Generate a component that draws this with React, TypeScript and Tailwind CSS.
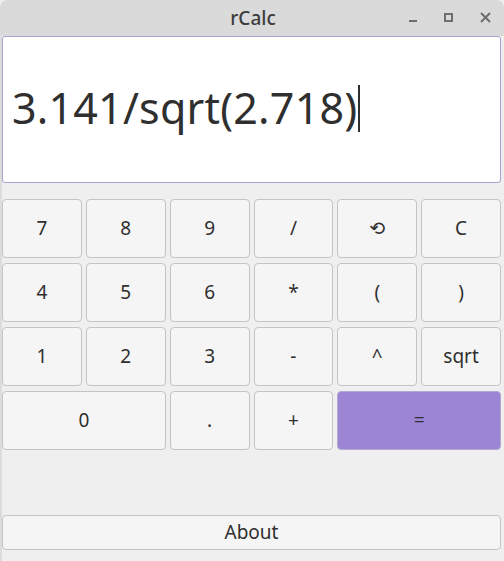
import React from "react";

const font = { fontFamily: '"Noto Sans", "Open Sans", "DejaVu Sans", sans-serif' };

type Key = { label: string; span?: boolean; accent?: boolean };

const keys: Key[] = [
    { label: "7" }, { label: "8" }, { label: "9" }, { label: "/" }, { label: "⟲" }, { label: "C" },
    { label: "4" }, { label: "5" }, { label: "6" }, { label: "*" }, { label: "(" }, { label: ")" },
    { label: "1" }, { label: "2" }, { label: "3" }, { label: "-" }, { label: "^" }, { label: "sqrt" },
    { label: "0", span: true }, { label: "." }, { label: "+" }, { label: "=", span: true, accent: true },
];

function TitleBar() {
    return (
        <div className="h-[36px] shrink-0 bg-[#dadada] rounded-t-[7px] grid grid-cols-[1fr_auto_1fr] items-center">
            <div />
            <div className="text-[19px] font-medium text-[#3c3c3c] pl-[2px]">rCalc</div>
            <div className="flex justify-end items-center pr-[13px] gap-[27px]">
                <div className="w-[8px] h-[2px] bg-[#6e6e6e] mt-[6px]" />
                <div className="w-[9px] h-[9px] border-2 border-[#6e6e6e] -mt-[2px]" />
                <svg width="11" height="11" viewBox="0 0 11 11" className="-mt-[1px]">
                    <path d="M1 1 L10 10 M10 1 L1 10" stroke="#6e6e6e" strokeWidth="2" />
                </svg>
            </div>
        </div>
    );
}

export default function App() {
    return (
        <div className="w-[504px] h-[561px] flex flex-col bg-[#efefef] text-[#2f2f2f]" style={font}>
            <TitleBar />
            <div className="flex-1 flex flex-col pr-[3px] border-l-2 border-[#dcdcdc]">
                <div className="h-[147px] shrink-0 bg-white border border-[#aa9fcd] rounded-[3px] flex items-center pl-[9px] pb-[4px]">
                    <span className="text-[43px] leading-none text-[#2f2f2f] tracking-[0.2px]">3.141/sqrt(2.718)</span>
                    <span className="w-[2px] h-[47px] bg-[#2f2f2f] ml-[1px] mt-[2px]" />
                </div>
                <div className="mt-[16px] grid grid-cols-6 gap-x-[4px] gap-y-[5px] auto-rows-[59px]">
                    {keys.map((k) => (
                        <button
                            key={k.label}
                            className={
                                (k.span ? "col-span-2 " : "") +
                                (k.accent
                                    ? "bg-[#9b85d4] border-[#b3a8cf] "
                                    : "bg-[#f5f5f5] border-[#c4c4c4] ") +
                                "border rounded-[4px] text-[19px] text-[#2f2f2f] flex items-center justify-center"
                            }
                        >
                            {k.label}
                        </button>
                    ))}
                </div>
                <div className="flex-1" />
                <button className="h-[35px] shrink-0 mb-[11px] bg-[#f5f5f5] border border-[#c4c4c4] rounded-[4px] text-[19px] text-[#2f2f2f] flex items-center justify-center">
                    About
                </button>
            </div>
        </div>
    );
}
